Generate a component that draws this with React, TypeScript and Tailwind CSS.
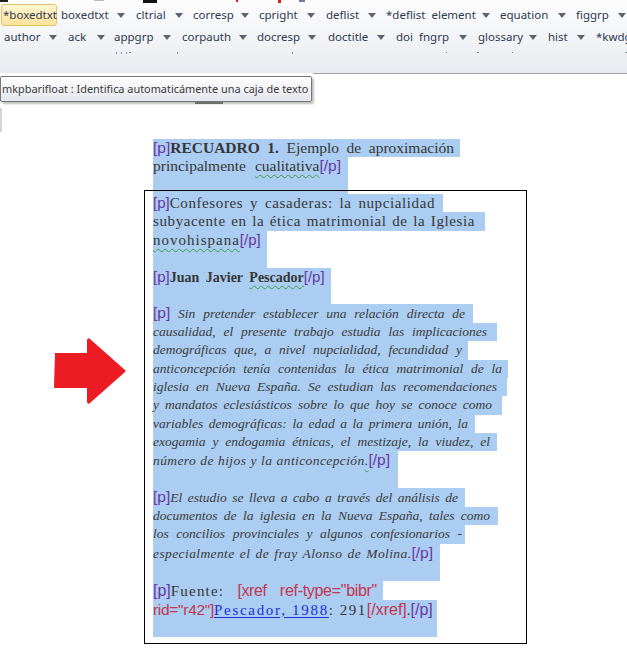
import React from "react";

const TAG = "text-[#6b35a6] [font-family:'Liberation_Sans',Arial,sans-serif]";
const XREF = "text-[#c3364f] [font-family:'Liberation_Sans',Arial,sans-serif]";
const HL = "bg-[#aacdf1]";

function Tri() {
  return (
    <svg width="8" height="5" viewBox="0 0 8 5" className="block">
      <path d="M0 0 L8 0 L4 5 Z" fill="#5d6573" />
    </svg>
  );
}

function Label({ cls, children }: { cls: string; children: React.ReactNode }) {
  return <span className={"shrink-0 whitespace-nowrap " + cls}>{children}</span>;
}

function TriBox({ cls }: { cls: string }) {
  return (
    <span className={"shrink-0 flex items-center " + cls}>
      <Tri />
    </span>
  );
}

function Wavy({ children }: { children: React.ReactNode }) {
  return (
    <span className="underline decoration-wavy decoration-[#3f9a45] decoration-1 underline-offset-[3px]">
      {children}
    </span>
  );
}

export default function App() {
  return (
    <div className="relative w-[627px] h-[653px] overflow-hidden bg-white">
      {/* Ribbon */}
      <div className="h-[73px] bg-gradient-to-b from-[#fdfdfe] to-[#e8ebef] [font-family:'Noto_Sans',sans-serif] text-[11.5px] text-[#2e3a50] overflow-hidden">
        <div className="flex h-[3px] items-start">
          <span className="w-[8px] h-[2px] bg-[#222]" />
          <span className="ml-[86px] w-[10px] h-[1px] bg-[#b8bcc4]" />
          <span className="ml-[39px] w-[14px] h-[3px] bg-[#111]" />
          <span className="ml-[79px] w-[2px] h-[2px] bg-[#e01a1a]" />
          <span className="ml-[40px] w-[3px] h-[3px] bg-[#e01a1a]" />
          <span className="ml-[18px] w-[6px] h-[2px] bg-[#6c7ea0]" />
        </div>
        {/* Row 1 */}
        <div className="mt-[1px] h-[22px] flex items-center pl-[1px]">
          <span className="shrink-0 w-[56px] h-[22px] rounded-[3px] border border-[#e3c36a] bg-gradient-to-b from-[#fff6d3] to-[#fde39a] flex items-center pl-[1px] whitespace-nowrap">
            *boxedtxt
          </span>
          <Label cls="ml-[4px] w-[56px]">boxedtxt</Label>
          <TriBox cls="w-[19px]" />
          <Label cls="w-[39px]">cltrial</Label>
          <TriBox cls="w-[18px]" />
          <Label cls="w-[48px]">corresp</Label>
          <TriBox cls="w-[18px]" />
          <Label cls="w-[48px]">cpright</Label>
          <TriBox cls="w-[19px]" />
          <Label cls="w-[42px]">deflist</Label>
          <TriBox cls="w-[18px]" />
          <Label cls="w-[96px]">*deflist&nbsp; element</Label>
          <TriBox cls="w-[18px]" />
          <Label cls="w-[58px]">equation</Label>
          <TriBox cls="w-[18px]" />
          <Label cls="w-[42px]">figgrp</Label>
          <TriBox cls="w-[9px]" />
        </div>
        {/* Row 2 */}
        <div className="h-[22px] flex items-center pl-[4px]">
          <Label cls="w-[45px]">author</Label>
          <TriBox cls="w-[19px]" />
          <Label cls="w-[29px]">ack</Label>
          <TriBox cls="w-[17px]" />
          <Label cls="w-[49px]">appgrp</Label>
          <TriBox cls="w-[19px]" />
          <Label cls="w-[57px]">corpauth</Label>
          <TriBox cls="w-[18px]" />
          <Label cls="w-[51px]">docresp</Label>
          <TriBox cls="w-[20px]" />
          <Label cls="w-[49px]">doctitle</Label>
          <TriBox cls="w-[19px]" />
          <Label cls="w-[23px]">doi</Label>
          <Label cls="w-[40px]">fngrp</Label>
          <TriBox cls="w-[19px]" />
          <Label cls="w-[51px]">glossary</Label>
          <TriBox cls="w-[19px]" />
          <Label cls="w-[29px]">hist</Label>
          <TriBox cls="w-[19px]" />
          <Label cls="w-[31px] overflow-hidden">*kwdg</Label>
        </div>
        <div className="mt-[4px] flex h-[3px] items-start">
          <span className="ml-[116px] w-[1px] h-[2px] bg-[#8a93a3]" />
          <span className="ml-[4px] w-[1px] h-[2px] bg-[#8a93a3]" />
          <span className="ml-[4px] w-[1px] h-[2px] bg-[#8a93a3]" />
          <span className="ml-[3px] w-[2px] h-[1px] bg-[#8a93a3]" />
          <span className="ml-[46px] w-[1px] h-[2px] bg-[#8a93a3]" />
          <span className="ml-[114px] w-[1px] h-[2px] bg-[#8a93a3]" />
          <span className="ml-[153px] w-[2px] h-[1px] bg-[#8a93a3]" />
          <span className="ml-[30px] w-[2px] h-[1px] bg-[#8a93a3]" />
          <span className="ml-[33px] w-[2px] h-[1px] bg-[#8a93a3]" />
          <span className="ml-[112px] w-[2px] h-[1px] bg-[#8a93a3]" />
        </div>
      </div>
      <div className="ml-[313px] h-[1px] bg-[#9ea4ad]" />

      {/* Document area */}
      <div className="flex">
        <div className="w-[144px] shrink-0">
          <div className="mt-[34px] w-[2px] h-[24px] bg-[#d4d6da]" />
          <svg width="74" height="70" viewBox="0 0 74 70" className="ml-[53px] mt-[205px] block">
            <path
              d="M2 17 Q1 16 2 16 L34 16 L34 3 Q35 0 37 2 L72 33 Q73 34 72 35 L37 66 Q35 68 34 65 L34 51 L2 51 Q1 51 1 50 Z"
              fill="#ed1c24"
            />
          </svg>
        </div>

        <div className="w-[383px] shrink-0 text-[#363636] [font-family:'Liberation_Serif','Times_New_Roman',serif]">
          {/* Title */}
          <div className="mt-[65px] pl-[9px] text-[15.5px] leading-[18.4px]">
            <div className={`${HL} w-[307px] pr-[6px] h-[18.4px] text-justify [text-align-last:justify]`}>
              <span className={TAG}>[p]</span>
              <b className="font-bold">RECUADRO 1.</b> Ejemplo de aproximación
            </div>
            <div className={`${HL} w-[195px] pr-[7px] h-[36.6px] text-justify [text-align-last:justify]`}>
              principalmente <Wavy>cualitativa</Wavy>
              <span className={TAG}>[/p]</span>
            </div>
          </div>

          {/* Box */}
          <div className="-mt-[4px] border border-black pl-[8px] pt-[3px] pb-[6px]">
            <div className="text-[15px] leading-[18.4px] tracking-[0.6px]">
              <div className={`${HL} w-[290px] pr-[8px] h-[18.4px] text-justify [text-align-last:justify]`}>
                <span className={`${TAG} tracking-normal`}>[p]</span>Confesores y casaderas: la nupcialidad
              </div>
              <div className={`${HL} w-[332px] pr-[10px] h-[18.4px] text-justify [text-align-last:justify]`}>
                subyacente en la ética matrimonial de la Iglesia
              </div>
              <div className={`${HL} w-[114px] pr-[5px] h-[37px] tracking-[1px]`}>
                <Wavy>novohispana</Wavy>
                <span className={`${TAG} tracking-normal`}>[/p]</span>
              </div>
            </div>

            <div className="text-[14px] leading-[18.4px]">
              <div className={`${HL} w-[178px] h-[36.6px] whitespace-nowrap [word-spacing:3px]`}>
                <span className={`${TAG} text-[15px]`}>[p]</span>
                <b>Juan Javier <Wavy>Pescador</Wavy></b>
                <span className={`${TAG} text-[15px]`}>[/p]</span>
              </div>
            </div>

            <div className="italic text-[13.5px] leading-[18.4px] text-[#3a3a3a]">
              <div className={`${HL} w-[320px] pr-[8px] h-[18.4px] text-justify [text-align-last:justify]`}>
                <span className={`${TAG} not-italic text-[15.5px]`}>[p]</span> Sin pretender establecer una relación directa de
              </div>
              <div className={`${HL} w-[344px] pr-[10px] h-[18.4px] text-justify [text-align-last:justify]`}>
                causalidad, el presente trabajo estudia las implicaciones
              </div>
              <div className={`${HL} w-[315px] pr-[6px] h-[18.4px] text-justify [text-align-last:justify]`}>
                demográficas que, a nivel nupcialidad, fecundidad y
              </div>
              <div className={`${HL} w-[355px] pr-[6px] h-[18.4px] text-justify [text-align-last:justify]`}>
                anticoncepción tenía contenidas la ética matrimonial de la
              </div>
              <div className={`${HL} w-[354px] pr-[10px] h-[18.4px] text-justify [text-align-last:justify]`}>
                iglesia en Nueva España. Se estudian las recomendaciones
              </div>
              <div className={`${HL} w-[349px] pr-[10px] h-[18.4px] text-justify [text-align-last:justify]`}>
                y mandatos eclesiásticos sobre lo que hoy se conoce como
              </div>
              <div className={`${HL} w-[322px] pr-[7px] h-[18.4px] text-justify [text-align-last:justify]`}>
                variables demográficas: la edad a la primera unión, la
              </div>
              <div className={`${HL} w-[344px] pr-[7px] h-[18.4px] text-justify [text-align-last:justify]`}>
                exogamia y endogamia étnicas, el mestizaje, la viudez, el
              </div>
              <div className={`${HL} w-[245px] pr-[8px] h-[37px] text-justify [text-align-last:justify] tracking-[0.4px]`}>
                número de hijos y la anticoncepción<Wavy>.</Wavy>
                <span className={`${TAG} not-italic text-[15.5px] tracking-normal`}>[/p]</span>
              </div>
            </div>

            <div className="italic text-[13.5px] leading-[18.4px] text-[#3a3a3a]">
              <div className={`${HL} w-[312px] pr-[7px] h-[18.4px] text-justify [text-align-last:justify]`}>
                <span className={`${TAG} not-italic text-[15.5px]`}>[p]</span>El estudio se lleva a cabo a través del análisis de
              </div>
              <div className={`${HL} w-[345px] pr-[8px] h-[18.4px] text-justify [text-align-last:justify]`}>
                documentos de la iglesia en la Nueva España, tales como
              </div>
              <div className={`${HL} w-[312px] pr-[3px] h-[18.4px] text-justify [text-align-last:justify]`}>
                los concilios provinciales y algunos confesionarios -
              </div>
              <div className={`${HL} w-[287px] pr-[7px] h-[37px] text-justify [text-align-last:justify] tracking-[0.4px]`}>
                especialmente el de fray Alonso de Molina.
                <span className={`${TAG} not-italic text-[15.5px] tracking-normal`}>[/p]</span>
              </div>
            </div>

            <div className="text-[15px] leading-[19px]">
              <div className={`${HL} w-[230px] pr-[6px] h-[19px] text-justify [text-align-last:justify]`}>
                <span className={`${TAG} text-[16px]`}>[p]</span>
                <span className="tracking-[1.2px]">Fuente:</span>{" "}
                <span className={`${XREF} text-[16px] tracking-[-0.4px]`}>[xref</span>{" "}
                <span className={`${XREF} text-[16px] tracking-[-0.3px]`}>ref-type="bibr"</span>
              </div>
              <div className={`${HL} w-[284px] pr-[2px] h-[37px] whitespace-nowrap`}>
                <span className={`${XREF} text-[15.5px] tracking-[-0.3px]`}>rid="r42"]</span>
                <span className="text-[#1a2fd8] underline underline-offset-[2px] tracking-[1.7px]">Pescador, 1988</span>
                <span className="tracking-[1.5px]">: 291</span>
                <span className={`${XREF} text-[16px]`}>[/xref]</span>
                <span>.</span>
                <span className={`${TAG} text-[16px]`}>[/p]</span>
              </div>
            </div>
          </div>
        </div>
      </div>

      {/* Tooltip overlay */}
      <div className="absolute left-0 top-[76px] w-[312px] h-[26px] border border-[#767676] rounded-[2px] bg-gradient-to-b from-white to-[#e4e5ee] shadow-[2px_2px_2px_rgba(0,0,0,0.25)] flex items-center pl-[1px] [font-family:'Noto_Sans',sans-serif] text-[10.9px] text-[#3b3b3b] whitespace-nowrap">
        mkpbarifloat : Identifica automaticámente una caja de texto
      </div>
      <div className="absolute left-[195px] top-[102px] w-[28px] h-[2px] bg-[#6f6f6f]" />
    </div>
  );
}
